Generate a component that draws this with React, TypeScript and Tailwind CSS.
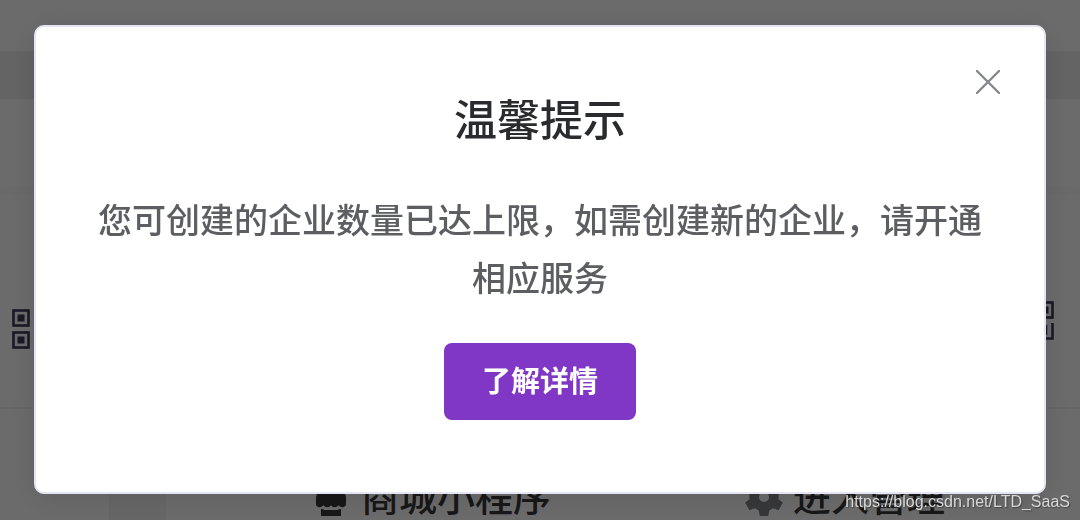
type IconProps = { className?: string };

function QrFinder({ x, y }: { x: number; y: number }) {
  return (
    <>
      <rect x={x + 1.5} y={y + 1.5} width="15" height="15" fill="none" stroke="currentColor" strokeWidth="2.6" />
      <rect x={x + 5.5} y={y + 5.5} width="7" height="7" fill="currentColor" />
    </>
  );
}

function QrLeftIcon({ className }: IconProps) {
  return (
    <svg viewBox="0 0 18 40" className={className} aria-hidden="true">
      <QrFinder x={0} y={0} />
      <QrFinder x={0} y={22} />
    </svg>
  );
}

function QrRightIcon({ className }: IconProps) {
  return (
    <svg viewBox="0 0 18 40" className={className} aria-hidden="true">
      <QrFinder x={0} y={0} />
      <path d="M16.5 22v15.5H0" fill="none" stroke="currentColor" strokeWidth="2.6" />
      <path d="M10.5 24v10" fill="none" stroke="currentColor" strokeWidth="1.5" />
    </svg>
  );
}

function ShopIcon({ className }: IconProps) {
  return (
    <svg viewBox="0 0 30 32" className={className} fill="currentColor" aria-hidden="true">
      <path d="M4 0h22l4 13v7c0 4-6 4-7.500 1c-1.500 3-6 3-7.500 0c-1.500 3-6 3-7.500 0c-1.500 3-7.500 3-7.500-1v-7z" />
      <path d="M5 25h2.500v1h15v-1H25v7H5z" />
    </svg>
  );
}

function GearIcon({ className }: IconProps) {
  return (
    <svg viewBox="0 0 24 24" className={className} fill="currentColor" aria-hidden="true">
      <path d="M9.300 0h5.400l.6 3.500 2.500 1.400 3.400-1.200 2.700 4.600-2.700 2.300v2.800l2.700 2.300-2.700 4.600-3.400-1.200-2.500 1.400-.6 3.500H9.300l-.6-3.500-2.500-1.400-3.400 1.200L.1 15.700l2.700-2.300v-2.800L.1 8.300l2.700-4.600 3.400 1.200 2.500-1.400zM12 8.800a3.200 3.200 0 1 0 0 6.400 3.200 3.200 0 0 0 0-6.400z" />
    </svg>
  );
}

function CloseIcon({ className }: IconProps) {
  return (
    <svg viewBox="0 0 24 24" className={className} aria-hidden="true">
      <path d="M1 1l22 22M23 1L1 23" stroke="currentColor" strokeWidth="2.4" strokeLinecap="round" />
    </svg>
  );
}

function Page() {
  return (
    <div className="flex h-screen flex-col overflow-hidden bg-white">
      <header className="h-[51px] shrink-0" />
      <div className="h-12 shrink-0 bg-[#eeeeee]" />
      <div className="h-24 shrink-0 border-b-8 border-[#fafafa]" />
      <section className="flex h-[214px] shrink-0 items-center justify-between border-b-2 border-[#f2f2f2] pr-[26px] pl-3 text-[#403a58]">
        <QrLeftIcon className="mt-14 h-10 w-[18px]" />
        <QrRightIcon className="mt-10 h-10 w-[18px]" />
      </section>
      <section className="flex grow">
        <div className="w-[109px] shrink-0" />
        <div className="w-[57px] shrink-0 bg-[#f4f4f4]" />
        <div className="flex grow items-end pb-1 pl-[150px] text-[38px] leading-[38px] font-medium text-[#383838]">
          <div className="flex w-[429px] shrink-0 items-end gap-[15px]">
            <ShopIcon className="h-8 w-[30px]" />
            <span className="pb-0.5">商城小程序</span>
          </div>
          <div className="flex shrink-0 items-end gap-[10px]">
            <GearIcon className="h-[38px] w-[38px] text-[#818489]" />
            <span className="pb-0.5">进入管理</span>
          </div>
        </div>
      </section>
    </div>
  );
}

function NoticeDialog() {
  return (
    <div className="fixed inset-0 flex items-start bg-black/58 px-[34px] pt-[25px]">
      <div
        role="dialog"
        aria-modal="true"
        aria-labelledby="notice-title"
        className="relative flex w-full flex-col items-center rounded-[10px] border-2 border-[#e4e5f2] bg-white px-[60px] pt-[62px] pb-[72px] text-center shadow-[0_4px_30px_rgba(0,0,0,0.12)]"
      >
        <button type="button" aria-label="关闭" className="absolute top-[43px] right-11 text-[#85878c]">
          <CloseIcon className="h-6 w-6" />
        </button>
        <h2 id="notice-title" className="text-[43px] leading-[56px] font-medium text-[#292b2d]">
          温馨提示
        </h2>
        <p className="mt-[45px] text-[34px] leading-[58px] font-medium text-[#5c5e62]">
          您可创建的企业数量已达上限，如需创建新的企业，请开通相应服务
        </p>
        <button
          type="button"
          className="mt-[37px] rounded-lg bg-[#8137c5] px-[38px] pt-4 pb-5 text-[29px] leading-[41px] font-bold text-white"
        >
          了解详情
        </button>
      </div>
    </div>
  );
}

function App() {
  return (
    <div className="font-['Noto_Sans_CJK_SC',sans-serif]">
      <Page />
      <NoticeDialog />
      <a
        href="https://blog.csdn.net/LTD_SaaS"
        className="fixed right-[10px] bottom-2 font-['Liberation_Sans',sans-serif] text-[16px] leading-5 text-[#d8d8d8] [text-shadow:1px_1px_1px_#444]"
      >
        https://blog.csdn.net/LTD_SaaS
      </a>
    </div>
  );
}

export default App;
